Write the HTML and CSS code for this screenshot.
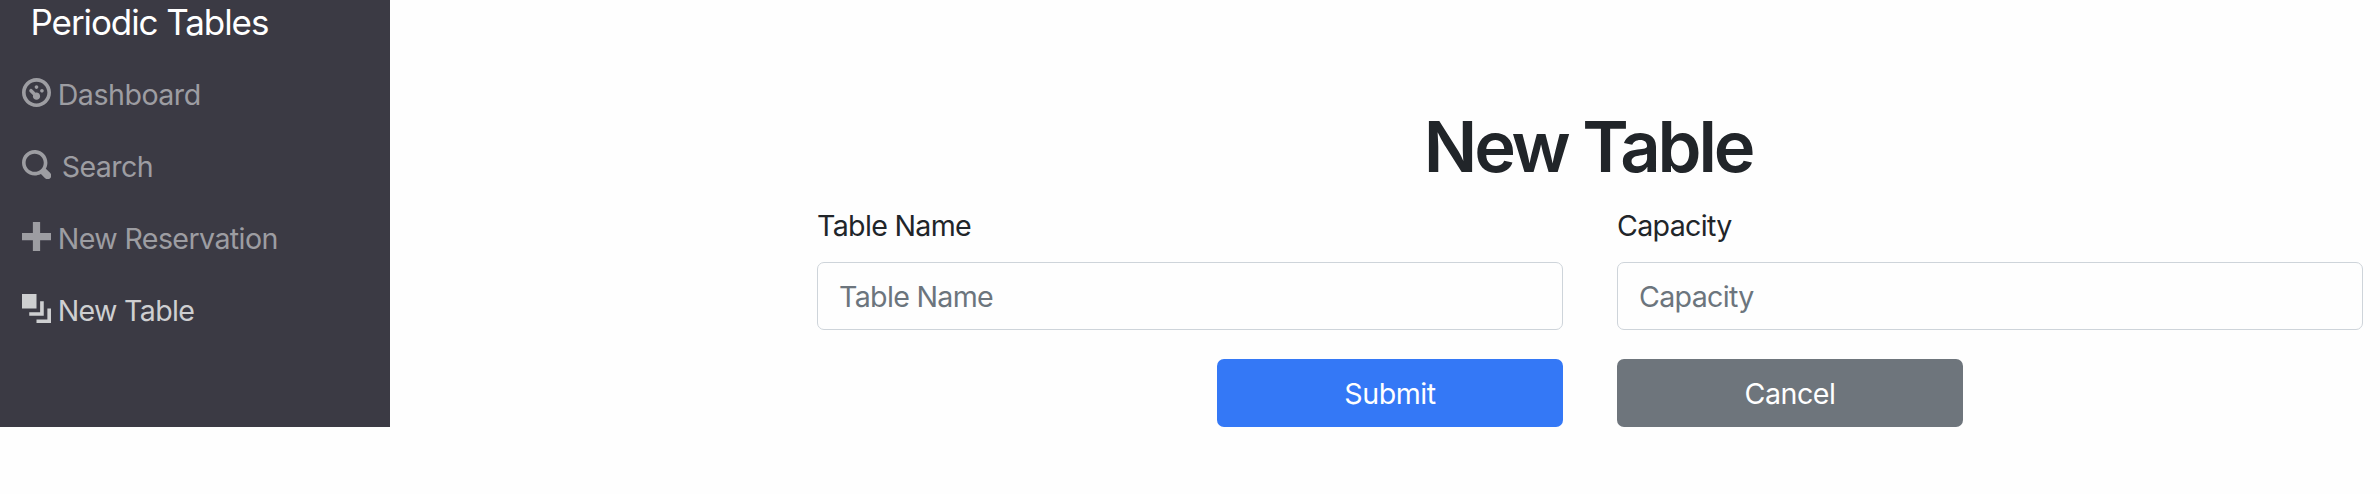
FILE: index.html
```html
<!DOCTYPE html>
<html lang="en">
<head>
<meta charset="utf-8">
<title>Periodic Tables</title>
<link rel="stylesheet" href="styles.css">
</head>
<body>
<div class="layout">
  <nav class="sidebar">
    <a class="brand">Periodic Tables</a>
    <ul class="menu">
      <li class="menu-item"><svg class="icon" viewBox="0 0 8 8"><path d="M4 0c-2.2 0-4 1.8-4 4s1.8 4 4 4 4-1.8 4-4-1.8-4-4-4zm0 1c1.66 0 3 1.34 3 3s-1.34 3-3 3-3-1.34-3-3 1.34-3 3-3zm0 1c-.28 0-.5.22-.5.5s.22.5.5.5.5-.22.5-.5-.22-.5-.5-.5zm-1.66 1a.5.5 0 0 0-.19.84l.91.91c-.02.08-.06.16-.06.25 0 .55.45 1 1 1s1-.45 1-1-.45-1-1-1c-.09 0-.17.04-.25.06l-.91-.91a.5.5 0 0 0-.44-.16.5.5 0 0 0-.06 0zm3.16 0c-.28 0-.5.22-.5.5s.22.5.5.5.5-.22.5-.5-.22-.5-.5-.5z"/></svg><span class="dashboard">Dashboard</span></li>
      <li class="menu-item"><svg class="icon" viewBox="0 0 8 8"><path d="M3.5 0c-1.93 0-3.5 1.57-3.5 3.5s1.57 3.5 3.5 3.5c.59 0 1.17-.14 1.66-.41a1 1 0 0 0 .13.13l1 1a1.02 1.02 0 1 0 1.44-1.44l-1-1a1 1 0 0 0-.16-.13c.27-.49.44-1.06.44-1.66 0-1.93-1.55-3.5-3.5-3.5zm0 1c1.39 0 2.5 1.11 2.5 2.5 0 .66-.24 1.27-.66 1.72-.01.01-.02.02-.03.03a1 1 0 0 0-.13.13c-.44.4-1.04.63-1.69.63-1.39 0-2.5-1.11-2.5-2.5s1.11-2.5 2.5-2.5z"/></svg><span class="search">Search</span></li>
      <li class="menu-item"><svg class="icon" viewBox="0 0 8 8"><path d="M3 0v3h-3v2h3v3h2v-3h3v-2h-3v-3h-2z"/></svg><span class="reservation">New Reservation</span></li>
      <li class="menu-item active"><svg class="icon" viewBox="0 0 8 8"><path d="M0 0v4h4v-4h-4zm5 2v3h-3v1h4v-4h-1zm2 2v3h-3v1h4v-4h-1z"/></svg><span>New Table</span></li>
    </ul>
  </nav>
  <main class="content">
    <h1 class="title">New Table</h1>
    <form class="form">
      <div class="field"><label class="label" for="table_name">Table Name</label><input class="input" id="table_name" placeholder="Table Name"></div>
      <div class="field"><label class="label" for="capacity">Capacity</label><input class="input" id="capacity" placeholder="Capacity"></div>
      <button class="button submit" type="button">Submit</button>
      <button class="button cancel" type="button">Cancel</button>
    </form>
  </main>
</div>
</body>
</html>
```
FILE: styles.css
```css
* { box-sizing: border-box; }
body { margin: 0; background: #fefefe; color: #212529; font-family: Inter, "Liberation Sans", sans-serif; font-size: 28.6px; font-weight: 440; letter-spacing: -.68px; line-height: 43px; }
.layout { display: flex; align-items: flex-start; }
.sidebar { width: 390px; height: 427px; background: #3b3a44; }
.brand { display: flex; align-items: center; height: 44px; padding-left: 30.5px; color: #fff; font-size: 35px; letter-spacing: -1.08px; }
.menu { list-style: none; margin: 13px 0 0; padding: 0; }
.menu-item { display: flex; align-items: center; gap: 6.7px; height: 72px; padding: 3px 0 0 22px; color: #9d9da2; }
.menu-item.active { color: #cecfd1; }
.icon { width: 29px; height: 29px; margin-bottom: 4px; fill: currentColor; }
.dashboard { letter-spacing: -.5px; }
.search { margin-left: 4px; letter-spacing: -.6px; }
.reservation { letter-spacing: -.6px; }
.content { flex: 1; padding: 104px 17px 0 427px; }
.title { margin: 0; height: 86px; padding-right: 4px; line-height: 86px; font-size: 70.5px; font-weight: 590; letter-spacing: -3.2px; text-align: center; }
.form { display: grid; grid-template-columns: 746px 746px; column-gap: 54px; row-gap: 29px; }
.label { display: block; height: 43px; margin: 14px 0 15px; }
.input { display: block; width: 100%; height: 68px; padding: 1px 21px 0; border: 1px solid #ced4da; border-radius: 7px; background: #fefefe; font: inherit; letter-spacing: inherit; }
.input::placeholder { color: #6c757d; opacity: 1; }
.button { width: 346px; height: 68px; border: 0; border-radius: 7px; color: #fff; font: inherit; letter-spacing: -.45px; }
.submit { justify-self: end; background: #3478f6; }
.cancel { background: #6e757c; }
```
